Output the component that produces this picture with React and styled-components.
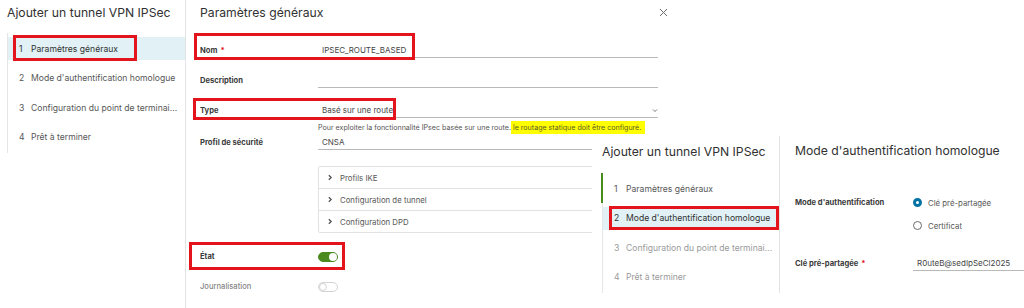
import React from 'react'
import styled, { createGlobalStyle } from 'styled-components'

const GlobalStyle = createGlobalStyle`
    html, body {
        margin: 0;
        padding: 0;
        background: #ffffff;
    }
    body {
        font-family: Inter, "Noto Sans", "DejaVu Sans", sans-serif;
        color: #333333;
        -webkit-font-smoothing: antialiased;
    }
`

const RED = '#e3141b'

const Canvas = styled.div`
    position: relative;
    width: 1024px;
    height: 308px;
    overflow: hidden;
    background: #ffffff;
`

const Shot = styled.div`
    display: flex;
    flex-direction: row;
    width: ${p => p.$width || 690}px;
    height: 100%;
    background: #ffffff;
`

const OverShot = styled(Shot)`
    position: absolute;
    left: 592px;
    top: 136px;
    height: 157px;
`

const Sidebar = styled.div`
    flex: 0 0 ${p => p.$width}px;
    box-sizing: border-box;
    border-right: 1px solid #e3e3e3;
    padding: ${p => p.$top}px 0 0 ${p => p.$left}px;
    display: flex;
    flex-direction: column;
`

const WizardTitle = styled.div`
    font-size: 12.2px;
    line-height: 16px;
    font-weight: 400;
    color: #313131;
    white-space: nowrap;
`

const StepList = styled.div`
    margin-top: ${p => p.$gap}px;
    border-left: 1px solid #e6e6e6;
    padding: 4px 0 4px 0;
    height: 112px;
    display: flex;
    flex-direction: column;
    gap: 6.5px;
`

const Step = styled.div`
    position: relative;
    height: 23px;
    display: flex;
    align-items: center;
    padding-left: 11px;
    font-size: 8.6px;
    white-space: nowrap;
    color: ${p => (p.$active ? '#313131' : p.$muted ? '#9a9a9a' : '#575757')};
    background: ${p => (p.$active ? '#e1f1f6' : 'transparent')};

    ${p => p.$done && `
        &::before {
            content: '';
            position: absolute;
            left: -2px;
            top: -4px;
            bottom: -3px;
            width: 2px;
            background: #4a8b1e;
        }
    `}
`

const StepNum = styled.span`
    width: 12px;
`

const RedBox = styled.span`
    position: absolute;
    left: ${p => p.$x}px;
    top: ${p => p.$y}px;
    width: ${p => p.$w}px;
    height: ${p => p.$h}px;
    box-sizing: border-box;
    border: 3px solid ${RED};
    pointer-events: none;
`

const Main = styled.div`
    flex: 1;
    position: relative;
    padding: 5px 0 0 14px;
    display: flex;
    flex-direction: column;
`

const PageTitle = styled.div`
    font-size: 12.2px;
    line-height: 16px;
    color: #313131;
    white-space: nowrap;
    margin-bottom: ${p => p.$gap}px;
`

const Close = styled.svg`
    position: absolute;
    right: 22px;
    top: 8px;
`

const Field = styled.div`
    position: relative;
    display: grid;
    grid-template-columns: 118px ${p => p.$inputWidth || 340}px;
    align-items: center;
    height: 15px;
    margin-top: ${p => p.$gap || 0}px;
`

const Label = styled.div`
    font-size: 7.6px;
    color: ${p => (p.$muted ? '#858585' : '#3a3a3a')};
    font-weight: ${p => (p.$muted ? 500 : 700)};
    white-space: nowrap;

    em {
        font-style: normal;
        color: ${RED};
        margin-left: 3px;
    }
`

const Input = styled.div`
    height: 15px;
    box-sizing: border-box;
    border-bottom: 1px solid #b9b9b9;
    padding-left: 4px;
    display: flex;
    align-items: center;
    justify-content: space-between;
    font-size: 8px;
    color: #454545;
    white-space: nowrap;
    overflow: hidden;
`

const Help = styled.div`
    margin: 3px 0 0 118px;
    height: 12px;
    display: flex;
    align-items: center;
    font-size: 7.1px;
    color: #555555;
    white-space: nowrap;

    mark {
        background: #ffff00;
        color: #5a5a2a;
        padding: 2px 4px 2px 2px;
    }
`

const Accordion = styled.div`
    margin: 16px 0 0 118px;
    width: 340px;
    border: 1px solid #e2e2e2;
    border-radius: 2px;
`

const Panel = styled.div`
    height: 21px;
    display: flex;
    align-items: center;
    gap: 7px;
    padding-left: 8px;
    font-size: 7.8px;
    color: #575757;
    border-top: ${p => (p.$first ? 'none' : '1px solid #e2e2e2')};
`

const Toggle = styled.div`
    position: relative;
    width: 20px;
    height: 10px;
    box-sizing: border-box;
    border-radius: 5px;
    background: ${p => (p.$on ? '#4b8a1f' : '#ffffff')};
    border: 1px solid ${p => (p.$on ? '#4b8a1f' : '#d4d4d4')};

    &::after {
        content: '';
        position: absolute;
        top: 0;
        ${p => (p.$on ? 'right: 0;' : 'left: 0;')}
        width: 8px;
        height: 8px;
        box-sizing: border-box;
        border-radius: 50%;
        background: #ffffff;
        border: ${p => (p.$on ? 'none' : '1px solid #d4d4d4')};
    }
`

const AuthMain = styled(Main)`
    padding: 7px 0 0 15px;
`

const RadioRow = styled.div`
    display: flex;
    align-items: center;
    gap: 6px;
    height: 15px;
    font-size: 7.8px;
    color: #575757;
`

const Radio = styled.span`
    width: 9px;
    height: 9px;
    box-sizing: border-box;
    border-radius: 50%;
    border: ${p => (p.$checked ? '3px solid #0072a3' : '1px solid #6a6a6a')};
    background: #ffffff;
`

const Chevron = ({ dir = 'right' }) => (
    <svg width="6" height="7" viewBox="0 0 6 7">
        {dir === 'right' ? (
            <polyline points="1.8,1.2 4.2,3.5 1.8,5.8" fill="none" stroke="#4d4d4d" strokeWidth="1.2" />
        ) : (
            <polyline points="1,2.5 3,4.5 5,2.5" fill="none" stroke="#666" strokeWidth="0.9" />
        )}
    </svg>
)

const App = () => {
    return (
        <Canvas>
            <GlobalStyle />
            <Shot $width={690}>
                <Sidebar $width={186} $top={5} $left={7}>
                    <WizardTitle>Ajouter un tunnel VPN IPSec</WizardTitle>
                    <StepList $gap={12}>
                        <Step $active>
                            <StepNum>1</StepNum>Paramètres généraux
                            <RedBox $x={5} $y={-2} $w={124} $h={26} />
                        </Step>
                        <Step><StepNum>2</StepNum>Mode d'authentification homologue</Step>
                        <Step><StepNum>3</StepNum>Configuration du point de terminai...</Step>
                        <Step><StepNum>4</StepNum>Prêt à terminer</Step>
                    </StepList>
                </Sidebar>

                <Main>
                    <PageTitle $gap={22}>Paramètres généraux</PageTitle>
                    <Close width="9" height="9" viewBox="0 0 9 9">
                        <path d="M1 1 L8 8 M8 1 L1 8" stroke="#6d6d6d" strokeWidth="1" />
                    </Close>

                    <Field>
                        <Label>Nom<em>*</em></Label>
                        <Input>IPSEC_ROUTE_BASED</Input>
                        <RedBox $x={-6} $y={-10} $w={221} $h={27} />
                    </Field>
                    <Field $gap={15}>
                        <Label>Description</Label>
                        <Input />
                    </Field>
                    <Field $gap={15}>
                        <Label>Type</Label>
                        <Input>Basé sur une route<Chevron dir="down" /></Input>
                        <RedBox $x={-7} $y={-5} $w={203} $h={22} />
                    </Field>
                    <Help>
                        Pour exploiter la fonctionnalité IPsec basée sur une route.
                        <mark>le routage statique doit être configuré.</mark>
                    </Help>
                    <Field $gap={2}>
                        <Label>Profil de sécurité</Label>
                        <Input>CNSA</Input>
                    </Field>
                    <Accordion>
                        <Panel $first><Chevron />Profils IKE</Panel>
                        <Panel><Chevron />Configuration de tunnel</Panel>
                        <Panel><Chevron />Configuration DPD</Panel>
                    </Accordion>
                    <Field $gap={16}>
                        <Label>État</Label>
                        <Toggle $on />
                        <RedBox $x={-11} $y={-7} $w={156} $h={28} />
                    </Field>
                    <Field $gap={15}>
                        <Label $muted>Journalisation</Label>
                        <Toggle />
                    </Field>
                </Main>
            </Shot>

            <OverShot $width={432}>
                <Sidebar $width={188} $top={8} $left={10}>
                    <WizardTitle>Ajouter un tunnel VPN IPSec</WizardTitle>
                    <StepList $gap={13}>
                        <Step $done><StepNum>1</StepNum>Paramètres généraux</Step>
                        <Step $active>
                            <StepNum>2</StepNum>Mode d'authentification homologue
                            <RedBox $x={6} $y={-1} $w={170} $h={24} />
                        </Step>
                        <Step $muted><StepNum>3</StepNum>Configuration du point de terminai...</Step>
                        <Step $muted><StepNum>4</StepNum>Prêt à terminer</Step>
                    </StepList>
                </Sidebar>

                <AuthMain>
                    <PageTitle $gap={36}>Mode d'authentification homologue</PageTitle>
                    <Field $inputWidth={120}>
                        <Label>Mode d'authentification</Label>
                        <RadioRow><Radio $checked />Clé pré-partagée</RadioRow>
                    </Field>
                    <Field $inputWidth={120} $gap={8}>
                        <span />
                        <RadioRow><Radio />Certificat</RadioRow>
                    </Field>
                    <Field $inputWidth={120} $gap={23}>
                        <Label>Clé pré-partagée<em>*</em></Label>
                        <Input>R0uteB@sedIpSeCl2025</Input>
                    </Field>
                </AuthMain>
            </OverShot>
        </Canvas>
    )
}

export default App
